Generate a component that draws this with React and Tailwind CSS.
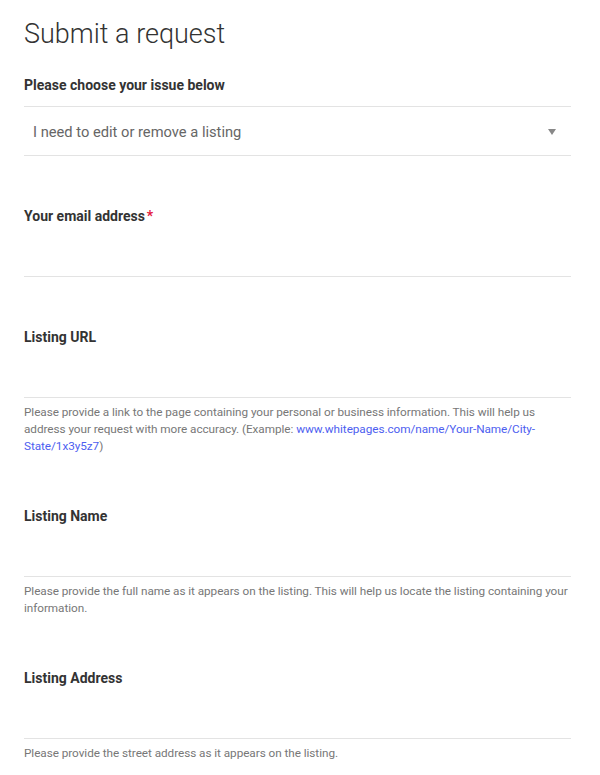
import React from "react";

function Field({ label, required, help, after }) {
  return (
    <div className={after ? "mt-[51px]" : "mt-[50px]"}>
      <label className="block text-[14px] leading-5 font-bold text-[#333]">
        {label}
        {required && <span className="text-[#e3173e] ml-[2px]">*</span>}
      </label>
      <div className="h-[51px] border-b border-[#e3e3e3]"></div>
      {help && (
        <p className="mt-[6px] text-[11.75px] leading-[17px] tracking-[-0.05px] text-[#777]">
          {help}
        </p>
      )}
    </div>
  );
}

export default function App() {
  return (
    <div
      className="bg-white min-h-[775px] pl-6 pr-[29px] pt-[14px]"
      style={{ fontFamily: "Roboto, 'Liberation Sans', sans-serif" }}
    >
      <h1 className="text-[27px] leading-10 font-light text-[#333]">
        Submit a request
      </h1>
      <p className="mt-[21px] text-[14px] leading-5 font-bold text-[#333]">
        Please choose your issue below
      </p>
      <div className="mt-[11px] h-[50px] border-y border-[#e3e3e3] flex items-center justify-between pl-[9px] pr-[15px]">
        <span className="text-[14.7px] text-[#666] mt-[2px]">
          I need to edit or remove a listing
        </span>
        <svg width="8" height="6" viewBox="0 0 8 6" className="mt-[1px]">
          <path d="M0 0h8L4 6z" fill="#888" />
        </svg>
      </div>
      <Field label="Your email address" required />
      <Field
        label="Listing URL"
        help={
          <>
            Please provide a link to the page containing your personal or
            business information. This will help us address your request with
            more accuracy. (Example:{" "}
            <span className="text-[#4d5ef0]">
              www.whitepages.com/name/Your-Name/City-State/1x3y5z7
            </span>
            )
          </>
        }
      />
      <Field
        label="Listing Name"
        after
        help="Please provide the full name as it appears on the listing. This will help us locate the listing containing your information."
      />
      <Field
        label="Listing Address"
        after
        help="Please provide the street address as it appears on the listing."
      />
    </div>
  );
}
